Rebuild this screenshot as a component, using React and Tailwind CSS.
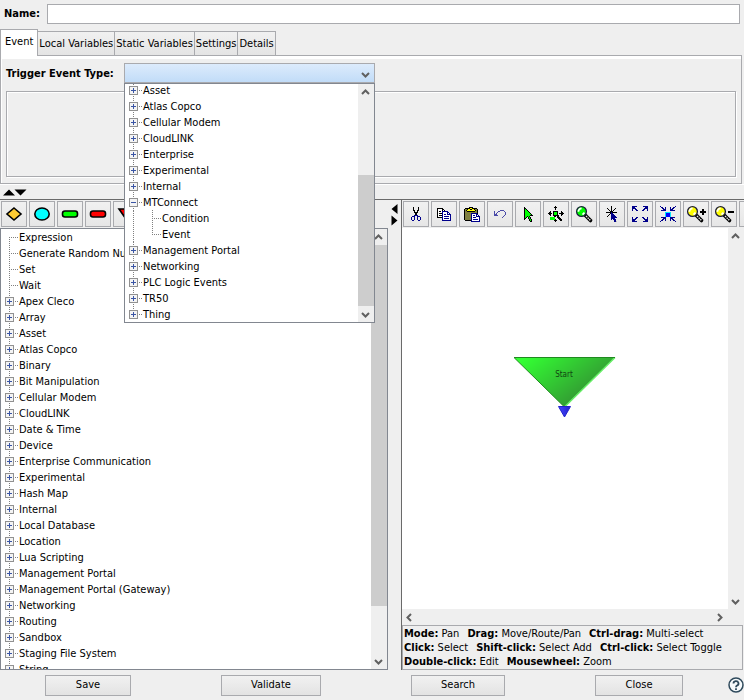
const TABS = ['Event', 'Local Variables', 'Static Variables', 'Settings', 'Details']

const EVENT_TYPES = [
  { label: 'Asset' },
  { label: 'Atlas Copco' },
  { label: 'Cellular Modem' },
  { label: 'CloudLINK' },
  { label: 'Enterprise' },
  { label: 'Experimental' },
  { label: 'Internal' },
  { label: 'MTConnect', children: ['Condition', 'Event'] },
  { label: 'Management Portal' },
  { label: 'Networking' },
  { label: 'PLC Logic Events' },
  { label: 'TR50' },
  { label: 'Thing', last: true },
]

const ACTIONS = [
  { label: 'Expression', leaf: true, first: true },
  { label: 'Generate Random Number', leaf: true },
  { label: 'Set', leaf: true },
  { label: 'Wait', leaf: true },
  { label: 'Apex Cleco' },
  { label: 'Array' },
  { label: 'Asset' },
  { label: 'Atlas Copco' },
  { label: 'Binary' },
  { label: 'Bit Manipulation' },
  { label: 'Cellular Modem' },
  { label: 'CloudLINK' },
  { label: 'Date & Time' },
  { label: 'Device' },
  { label: 'Enterprise Communication' },
  { label: 'Experimental' },
  { label: 'Hash Map' },
  { label: 'Internal' },
  { label: 'Local Database' },
  { label: 'Location' },
  { label: 'Lua Scripting' },
  { label: 'Management Portal' },
  { label: 'Management Portal (Gateway)' },
  { label: 'Networking' },
  { label: 'Routing' },
  { label: 'Sandbox' },
  { label: 'Staging File System' },
  { label: 'String' },
]

const HINTS = [
  [['Mode:', 'Pan'], ['Drag:', 'Move/Route/Pan'], ['Ctrl-drag:', 'Multi-select']],
  [['Click:', 'Select'], ['Shift-click:', 'Select Add'], ['Ctrl-click:', 'Select Toggle']],
  [['Double-click:', 'Edit'], ['Mousewheel:', 'Zoom']],
]

const PALETTE = {
  k: '#000000',
  b: '#00008b',
  B: '#0000ff',
  u: '#4a4aa8',
  w: '#ffffff',
  g: '#00ff00',
  o: '#808040',
  y: '#ffff00',
  c: '#00e5ff',
  s: '#b8b8b8',
}

const CUT = [
  '..k....k..',
  '..k....k..',
  '..k....k..',
  '..kk..kk..',
  '...k..k...',
  '...kkkk...',
  '....kk....',
  '....kk....',
  '...bbbb...',
  '.bbb..bbb.',
  'b..b..b..b',
  'b..b..b..b',
  'b..b..b..b',
  '.bb....bb.',
]

const COPY = [
  'kkkkkk.........',
  'kwwwwkk........',
  'kwwwwkwk.......',
  'kwkkwbbbbbb....',
  'kwwwwbwwwwbb...',
  'kwkkkbwwwwbwb..',
  'kwwwwbwbbwbbbb.',
  'kwkkkbwwwwwwwb.',
  'kwwwwbwbbbbbwb.',
  'kkkkkbwwwwwwwb.',
  '.....bwbbbbbwb.',
  '.....bwwwwwwwb.',
  '.....bbbbbbbbb.',
]

const PASTE = [
  '.....kkkk.......',
  '.kkkkkyykkkkk...',
  'kookyykkyykook..',
  'kokyyyyyyyykok..',
  'kookkkkkkkkook..',
  'kooooooooooook..',
  'koooooobbbbbbk..',
  'koooooobwwwwbb..',
  'koooooobwbbwbwb.',
  'koooooobwwwwbbbb',
  'koooooobwbbbwwwb',
  'koooooobwwwwwwwb',
  'koooooobwbbbbbwb',
  '.kkkkkkbwwwwwwwb',
  '.......bbbbbbbbb',
]

const UNDO = [
  '......uuuu..',
  'u...uu....u.',
  'u..u.......u',
  'u.u........u',
  'uuu........u',
  'uuuu......u.',
  '.........u..',
  '........u...',
]

const POINTER = [
  'k........',
  'kk.......',
  'kgk......',
  'kggk.....',
  'kgggk....',
  'kggggk...',
  'kgggggk..',
  'kggggggk.',
  'kgggggkkk',
  'kggkgk...',
  'kgk.kgk..',
  'kk..kgk..',
  'k....kgk.',
  '.....kgk.',
  '......kk.',
]

const MOVE = [
  '.......k........',
  '......kkk.......',
  '.......k........',
  '.......k........',
  '................',
  '..k..kkkkk...k..',
  '.kk..kgggk...kk.',
  'kkkk.kgggk.kkkkk',
  '.kk..kgggk...kk.',
  '..k..kkkkkk..k..',
  '......kk.kk.....',
  '..ggggg..kkk....',
  '..ggggg...kkk...',
  '..gggggk...kkk..',
  '......kkk...kk..',
  '.......k........',
]

const PICK = [
  '.....k.......',
  '.....k.......',
  '.k...k...k...',
  '..k..k..k....',
  '...k.k.k.....',
  '....kkk......',
  'kkkkkbkkkkk..',
  '....kbb......',
  '...k.bbb.....',
  '..k..bbbb....',
  '.k...bbbbb...',
  '.....bbbbbb..',
  '.....bbbb....',
  '.....b.bbb...',
  '........bb...',
  '........bbs..',
]

const FIT = [
  'bbbbb......bbbbb',
  'bbb..........bbb',
  'bbbb........bbbb',
  'b..bb......bb..b',
  'b...bb....bb...b',
  '................',
  '................',
  '................',
  '................',
  '................',
  '................',
  'b...bb....bb...b',
  'b..bb......bb..b',
  'bbbb........bbbb',
  'bbb..........bbb',
  'bbbbb......bbbbb',
]

const SHRINK = [
  'b..............b',
  '.bb..b....b..bb.',
  '..bb.b....b.bb..',
  '...bbb....bbb...',
  '.bbbbb....bbbbb.',
  '................',
  '.....cccccc.....',
  '.....cBBBBc.....',
  '.....cBBBBc.....',
  '.....cBBBBc.....',
  '.....cBBBBc.....',
  '.bbbbb....bbbbb.',
  '...bbb....bbb...',
  '..bb.b....b.bb..',
  '.bb..b....b..bb.',
  'b..............b',
]

function PixelIcon({ rows }) {
  const width = rows[0].length
  return (
    <svg width={width} height={rows.length} shapeRendering="crispEdges" aria-hidden="true">
      {rows.flatMap((row, y) =>
        [...row].map((c, x) =>
          PALETTE[c] ? <rect key={`${x}-${y}`} x={x} y={y} width="1" height="1" fill={PALETTE[c]} /> : null
        )
      )}
    </svg>
  )
}

function Magnifier({ fill, sign }) {
  return (
    <svg width={sign ? 18 : 16} height="16" className="overflow-visible" aria-hidden="true">
      <path d="M9.5 9.5l5 5" stroke="#000" strokeWidth="3.6" strokeLinecap="round" />
      <path d="M10 10l4.5 4.5" stroke="#e8e8e8" strokeWidth="1.4" strokeDasharray="1.5 0.8" />
      <circle cx="5.5" cy="5.5" r="4.9" fill={fill} stroke="#1c1c3c" strokeWidth="1.3" />
      <path d="M2.4 5.8a3.2 3.2 0 0 1 3.2-3.4M6.5 8.6l2-2" fill="none" stroke="#fff" strokeWidth="1.8" />
      {sign && <path d="M13 6h6" stroke="#000" strokeWidth="2" shapeRendering="crispEdges" />}
      {sign === 'plus' && <path d="M16 3v6" stroke="#000" strokeWidth="2" shapeRendering="crispEdges" />}
    </svg>
  )
}

function ShapeIcon({ children }) {
  return (
    <svg width="18" height="16" stroke="#000" strokeWidth="1.6" aria-hidden="true">
      {children}
    </svg>
  )
}

const SHAPES = [
  { name: 'Decision', icon: <ShapeIcon><path d="M9 2l7 6-7 6-7-6z" fill="#ffcc33" /></ShapeIcon> },
  { name: 'Ellipse', icon: <ShapeIcon><ellipse cx="9" cy="8" rx="7.2" ry="6" fill="#00ffff" /></ShapeIcon> },
  { name: 'Success', icon: <ShapeIcon><rect x="1.5" y="5" width="15" height="6" rx="2.5" fill="#00ff00" /></ShapeIcon> },
  { name: 'Failure', icon: <ShapeIcon><rect x="1.5" y="5" width="15" height="6" rx="2.5" fill="#ff0000" /></ShapeIcon> },
  { name: 'End', icon: <ShapeIcon><path d="M2 3h14l-7 10z" fill="#ff0000" /></ShapeIcon> },
]

const TOOLS = [
  { name: 'Cut', icon: <PixelIcon rows={CUT} /> },
  { name: 'Copy', icon: <PixelIcon rows={COPY} /> },
  { name: 'Paste', icon: <PixelIcon rows={PASTE} /> },
  { name: 'Undo', icon: <PixelIcon rows={UNDO} /> },
  { name: 'Select', icon: <PixelIcon rows={POINTER} /> },
  { name: 'Move', icon: <PixelIcon rows={MOVE} /> },
  { name: 'Find', icon: <Magnifier fill="#00ff00" /> },
  { name: 'Pick', icon: <PixelIcon rows={PICK} /> },
  { name: 'Fit', icon: <PixelIcon rows={FIT} /> },
  { name: 'Shrink', icon: <PixelIcon rows={SHRINK} /> },
  { name: 'Zoom in', icon: <Magnifier fill="#ffff00" sign="plus" /> },
  { name: 'Zoom out', icon: <Magnifier fill="#ffff00" sign="minus" /> },
  { name: 'More', icon: null },
]

function ToolButton({ name, children }) {
  return (
    <button
      type="button"
      aria-label={name}
      className="flex size-[26px] shrink-0 items-center justify-center border border-[#a9aaae] bg-linear-to-b from-[#f1f1f1] to-[#e6e6e6]"
    >
      {children}
    </button>
  )
}

const CHEVRONS = {
  up: 'M1 6l3.500-3.500L8 6',
  down: 'M1 3l3.500 3.500L8 3',
  left: 'M6 1L2.500 4.500 6 8',
  right: 'M3 1l3.500 3.500L3 8',
}

function Chevron({ dir }) {
  return (
    <svg width="9" height="9" fill="none" stroke="#606060" strokeWidth="2" aria-hidden="true">
      <path d={CHEVRONS[dir]} />
    </svg>
  )
}

function ScrollButton({ dir }) {
  return (
    <button type="button" aria-label={`Scroll ${dir}`} className="flex size-4 shrink-0 items-center justify-center pr-px">
      <Chevron dir={dir} />
    </button>
  )
}

function ScrollBar({ children }) {
  return (
    <div className="flex w-4 shrink-0 flex-col bg-[#efefef]">
      <ScrollButton dir="up" />
      <div className="flex min-h-0 flex-1 flex-col">{children}</div>
      <ScrollButton dir="down" />
    </div>
  )
}

// dotted connector lines with the expand box on top
function Branch({ leaf, open, first, last }) {
  return (
    <svg width="18" height="16" shapeRendering="crispEdges" fill="none" className="shrink-0" aria-hidden="true">
      <path d={`M8.5 ${first ? 8 : 0}V${last ? 8 : 16}M8 8.500h10`} stroke="#808080" strokeDasharray="1 1" />
      {!leaf && (
        <>
          <rect x="4.5" y="4.5" width="8" height="8" fill="#f4f4f4" stroke="#919191" />
          <path d={open ? 'M6 8.500h5' : 'M6 8.500h5M8.500 6v5'} stroke="#3a55a5" />
        </>
      )}
    </svg>
  )
}

function TreeRow({ label, ...branch }) {
  return (
    <button type="button" className="flex h-4 items-center whitespace-nowrap">
      <Branch {...branch} />
      <span className="pt-0.5">{label}</span>
    </button>
  )
}

function TreeItem({ item }) {
  return (
    <li>
      <TreeRow label={item.label} leaf={item.leaf} open={!!item.children} first={item.first} last={item.last} />
      {item.children && (
        <ul className="ml-2 border-l border-dotted border-[#808080] pl-2.5">
          {item.children.map((child, i) => (
            <li key={child}>
              <TreeRow label={child} leaf last={i === item.children.length - 1} />
            </li>
          ))}
        </ul>
      )}
    </li>
  )
}

function Tree({ items, className }) {
  return (
    <ul className={className}>
      {items.map((item) => (
        <TreeItem key={item.label} item={item} />
      ))}
    </ul>
  )
}

function TriggerSelect() {
  return (
    <div className="relative h-5 w-[251px]">
      <select
        id="trigger"
        className="block h-full w-full appearance-none border border-[#a9aaae] bg-linear-to-b from-[#dcebfc] to-[#c1dcf8] px-1"
      >
        <option></option>
      </select>
      <span className="pointer-events-none absolute right-[5px] top-[7px]">
        <Chevron dir="down" />
      </span>
      <div className="absolute left-0 top-full z-10 flex h-60 w-full border border-[#828790] bg-white">
        <div className="flex-1 overflow-hidden">
          <Tree items={EVENT_TYPES} className="-mt-0.5" />
        </div>
        <ScrollBar>
          <div className="mt-auto h-[131px] bg-[#cdcdcd]" />
        </ScrollBar>
      </div>
    </div>
  )
}

function StartNode() {
  return (
    <svg width="102" height="62" className="shrink-0">
      <defs>
        <linearGradient id="start" x1="0" y1="0" x2="0.8" y2="0.5">
          <stop offset="0.1" stopColor="#33ff33" />
          <stop offset="1" stopColor="#33a033" />
        </linearGradient>
        <linearGradient id="port" x1="0" y1="0" x2="1" y2="0">
          <stop offset="0" stopColor="#4444ff" />
          <stop offset="1" stopColor="#2222cc" />
        </linearGradient>
      </defs>
      <path d="M0 0.5h101L50.5 50z" fill="url(#start)" />
      <path d="M101 0.5L50.5 50" stroke="#66ee66" strokeWidth="1.5" />
      <path d="M50.5 50L0 0.5h101" fill="none" stroke="#1f8a1f" />
      <path d="M44.5 49.5h12l-6 10.5z" fill="url(#port)" stroke="#2222cc" />
      <text x="50" y="20" textAnchor="middle" fontSize="8" fill="#114411">Start</text>
    </svg>
  )
}

function FooterButton({ className, children }) {
  return (
    <button
      type="button"
      className={`h-[21px] border border-[#a9aaae] bg-linear-to-b from-[#f1f1f1] to-[#e3e3e3] ${className}`}
    >
      {children}
    </button>
  )
}

export default function App() {
  return (
    <div className="flex h-screen flex-col overflow-hidden bg-[#efefef] font-['DejaVu_Sans_Condensed','DejaVu_Sans',sans-serif] text-[11px] leading-4 text-black">
      <div className="flex items-center gap-2 pl-1 pr-1 pt-1">
        <label htmlFor="name" className="w-[35px] whitespace-nowrap font-bold">Name:</label>
        <input id="name" type="text" className="h-5 min-w-0 flex-1 border border-[#a9aaae] bg-white px-1" />
      </div>

      <div role="tablist" className="mt-[5px] flex items-end">
        {TABS.map((tab, i) =>
          i === 0 ? (
            <button
              key={tab}
              type="button"
              role="tab"
              aria-selected="true"
              className="relative -mb-px h-[27px] border border-b-0 border-[#a9aaae] bg-white px-1 pb-0.5"
            >
              {tab}
            </button>
          ) : (
            <button
              key={tab}
              type="button"
              role="tab"
              aria-selected="false"
              className="h-6 border border-b-0 border-l-0 border-[#a9aaae] bg-linear-to-b from-[#f1f1f1] to-[#e4e4e4] px-px"
            >
              {tab}
            </button>
          )
        )}
      </div>

      <section className="mr-0.5 border border-[#a9aaae]">
        <div className="border-l border-t-3 border-white pb-1.5 pl-1 pr-[5px] pt-1">
          <div className="flex items-center gap-2">
            <label htmlFor="trigger" className="w-[110px] whitespace-nowrap pt-px font-bold">Trigger Event Type:</label>
            <TriggerSelect />
          </div>
          <div className="mt-2 h-[86px] border border-[#a9aaae] shadow-[inset_1px_1px_0_#fff,1px_1px_0_#fff]" />
        </div>
      </section>

      <div className="flex h-4 items-center border-b border-t border-b-[#6a6a6a] border-t-white pl-[3px]">
        <svg width="24" height="7" aria-hidden="true">
          <path d="M0 6.5L6 0.5l6 6zM11.5 0.5h12l-6 6z" />
        </svg>
      </div>

      <div className="grid min-h-0 flex-1 grid-cols-[388fr_13px_343fr]">
        <div className="flex min-h-0 min-w-0 flex-col">
          <div className="flex gap-0.5 overflow-hidden p-px">
            {SHAPES.map((s) => (
              <ToolButton key={s.name} name={s.name}>{s.icon}</ToolButton>
            ))}
          </div>
          <div className="flex min-h-0 flex-1 border border-[#828790] bg-white">
            <div className="flex-1 overflow-hidden">
              <Tree items={ACTIONS} />
            </div>
            <ScrollBar>
              <div className="h-[361px] bg-[#cdcdcd]" />
            </ScrollBar>
          </div>
        </div>

        <div className="flex justify-center pt-1">
          <svg width="7" height="22" aria-hidden="true">
            <path d="M6.5 0v10L0.5 5zM0.5 11.5v10l6-5z" />
          </svg>
        </div>

        <div className="flex min-h-0 min-w-0 flex-col border-l border-[#6a6a6a]">
          <div className="flex gap-0.5 overflow-hidden p-px">
            {TOOLS.map((t) => (
              <ToolButton key={t.name} name={t.name}>{t.icon}</ToolButton>
            ))}
          </div>
          <div className="flex min-h-0 flex-1">
            <div className="flex flex-1 justify-center bg-white pt-[129px]">
              <StartNode />
            </div>
            <ScrollBar />
          </div>
          <div className="flex justify-between pr-4">
            <ScrollButton dir="left" />
            <ScrollButton dir="right" />
          </div>
          <div className="mr-px whitespace-nowrap border border-[#a9aaae] pl-px pt-px leading-[14px]">
            {HINTS.map((row, i) => (
              <p key={i} className="flex gap-2">
                {row.map(([keys, action]) => (
                  <span key={keys}>
                    <b>{keys}</b> {action}
                  </span>
                ))}
              </p>
            ))}
          </div>
        </div>
      </div>

      <footer className="flex h-[30px] items-center">
        <div className="flex flex-1 justify-around">
          <FooterButton className="w-[86px]">Save</FooterButton>
          <FooterButton className="w-[100px]">Validate</FooterButton>
          <FooterButton className="w-[94px]">Search</FooterButton>
          <FooterButton className="w-[88px]">Close</FooterButton>
        </div>
        <button type="button" aria-label="Help">
          <svg width="16" height="16" fill="none" stroke="#2f4a5c" aria-hidden="true">
            <circle cx="8" cy="8" r="7" fill="#f6fafc" strokeWidth="1.5" />
            <path d="M5.5 6.5a2.5 2.3 0 1 1 3.6 2Q8 9.200 8 10.200M8 11.300v1.700" strokeWidth="1.8" />
          </svg>
        </button>
      </footer>
    </div>
  )
}
